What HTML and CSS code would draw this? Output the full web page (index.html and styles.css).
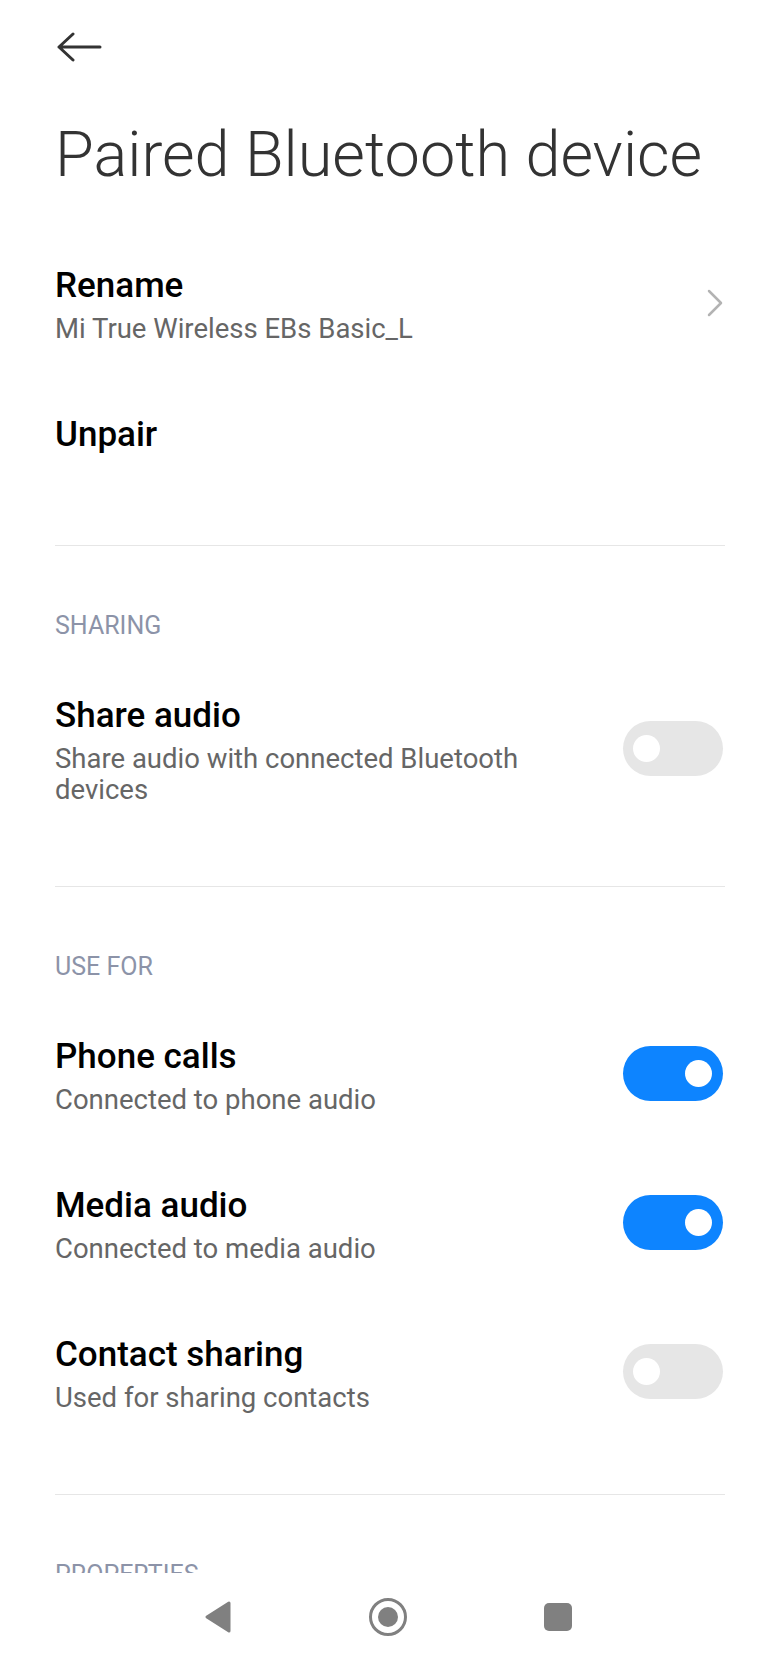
FILE: index.html
```html
<!DOCTYPE html>
<html lang="en">
<head>
  <meta charset="UTF-8">
  <meta name="viewport" content="width=device-width, initial-scale=1.0">
  <title>Paired Bluetooth device</title>
  <link rel="stylesheet" href="styles.css">
</head>
<body>
  <div class="screen">
    <div class="topbar">
      <svg class="back-arrow" width="46" height="30" viewBox="0 0 46 30">
        <path d="M44 15 H3 M17 2 L3 15 L17 28" fill="none" stroke="#333" stroke-width="3" stroke-linecap="round" stroke-linejoin="round"/>
      </svg>
    </div>

    <h1 class="page-title">Paired Bluetooth device</h1>

    <div class="group group-first">
      <div class="item">
        <div class="item-text">
          <div class="item-title">Rename</div>
          <div class="item-sub">Mi True Wireless EBs Basic_L</div>
        </div>
        <svg class="chevron" width="16" height="28" viewBox="0 0 16 28">
          <path d="M2 2 L14 14 L2 26" fill="none" stroke="#b3b3b3" stroke-width="2.5" stroke-linecap="round" stroke-linejoin="round"/>
        </svg>
      </div>
      <div class="item">
        <div class="item-text">
          <div class="item-title">Unpair</div>
        </div>
      </div>
    </div>

    <div class="group">
      <div class="group-label">SHARING</div>
      <div class="item">
        <div class="item-text">
          <div class="item-title">Share audio</div>
          <div class="item-sub">Share audio with connected Bluetooth devices</div>
        </div>
        <div class="toggle"><span class="knob"></span></div>
      </div>
    </div>

    <div class="group">
      <div class="group-label">USE FOR</div>
      <div class="item">
        <div class="item-text">
          <div class="item-title">Phone calls</div>
          <div class="item-sub">Connected to phone audio</div>
        </div>
        <div class="toggle on"><span class="knob"></span></div>
      </div>
      <div class="item">
        <div class="item-text">
          <div class="item-title">Media audio</div>
          <div class="item-sub">Connected to media audio</div>
        </div>
        <div class="toggle on"><span class="knob"></span></div>
      </div>
      <div class="item">
        <div class="item-text">
          <div class="item-title">Contact sharing</div>
          <div class="item-sub">Used for sharing contacts</div>
        </div>
        <div class="toggle"><span class="knob"></span></div>
      </div>
    </div>

    <div class="group">
      <div class="group-label">PROPERTIES</div>
    </div>
  </div>

  <div class="navbar">
    <div class="nav-btn">
      <svg width="28" height="32" viewBox="0 0 28 32">
        <polygon points="25,2 25,30 3,16" fill="#808080" stroke="#808080" stroke-width="3" stroke-linejoin="round"/>
      </svg>
    </div>
    <div class="nav-btn">
      <svg width="40" height="40" viewBox="0 0 40 40">
        <circle cx="20" cy="20" r="17.5" fill="none" stroke="#808080" stroke-width="3"/>
        <circle cx="20" cy="20" r="10" fill="#808080"/>
      </svg>
    </div>
    <div class="nav-btn">
      <div class="nav-square"></div>
    </div>
  </div>
</body>
</html>
```

FILE: styles.css
```css
html, body {
  margin: 0;
  padding: 0;
}
body {
  font-family: Roboto, "Noto Sans", sans-serif;
  background-color: #fff;
  color: #000;
  width: 780px;
  height: 1660px;
  overflow: hidden;
}
.screen {
  height: 1573px;
  overflow: hidden;
  padding: 0 55px;
}
.topbar {
  padding-top: 32px;
  height: 30px;
}
.back-arrow {
  display: block;
  margin-left: 1px;
}
.page-title {
  margin: 53px 0 0 0;
  font-size: 63px;
  font-weight: 300;
  line-height: 80px;
  color: #333;
  white-space: nowrap;
}
.group {
  border-top: 1px solid #e6e6e6;
  padding: 60px 0 45px 0;
}
.group-first {
  border-top: none;
  padding: 36px 0 54px 0;
}
.group-label {
  font-size: 25px;
  line-height: 40px;
  color: #8c93a8;
  margin-bottom: 15px;
}
.item {
  display: flex;
  align-items: center;
  padding: 35px 2px 36px 0;
}
.item-text {
  flex: 1;
  margin-right: 40px;
}
.item-title {
  font-size: 35px;
  font-weight: 500;
  line-height: 40px;
  color: #000;
}
.item-sub {
  margin-top: 7px;
  font-size: 27.5px;
  line-height: 31px;
  color: #666;
}
.chevron {
  display: block;
  margin-bottom: 5px;
}
.toggle {
  position: relative;
  width: 100px;
  height: 55px;
  border-radius: 28px;
  background-color: #e6e6e6;
  margin-bottom: 5px;
  flex-shrink: 0;
}
.toggle .knob {
  position: absolute;
  top: 14px;
  left: 10px;
  width: 27px;
  height: 27px;
  border-radius: 50%;
  background-color: #fff;
}
.toggle.on {
  background-color: #0d84ff;
}
.toggle.on .knob {
  left: auto;
  right: 11px;
}
.navbar {
  height: 87px;
  display: flex;
  align-items: center;
  gap: 130px;
  padding-left: 198px;
  background-color: #fff;
}
.nav-btn {
  width: 40px;
  display: flex;
  align-items: center;
  justify-content: center;
}
.nav-btn svg {
  display: block;
}
.nav-square {
  width: 28px;
  height: 28px;
  border-radius: 5px;
  background-color: #808080;
}
```
